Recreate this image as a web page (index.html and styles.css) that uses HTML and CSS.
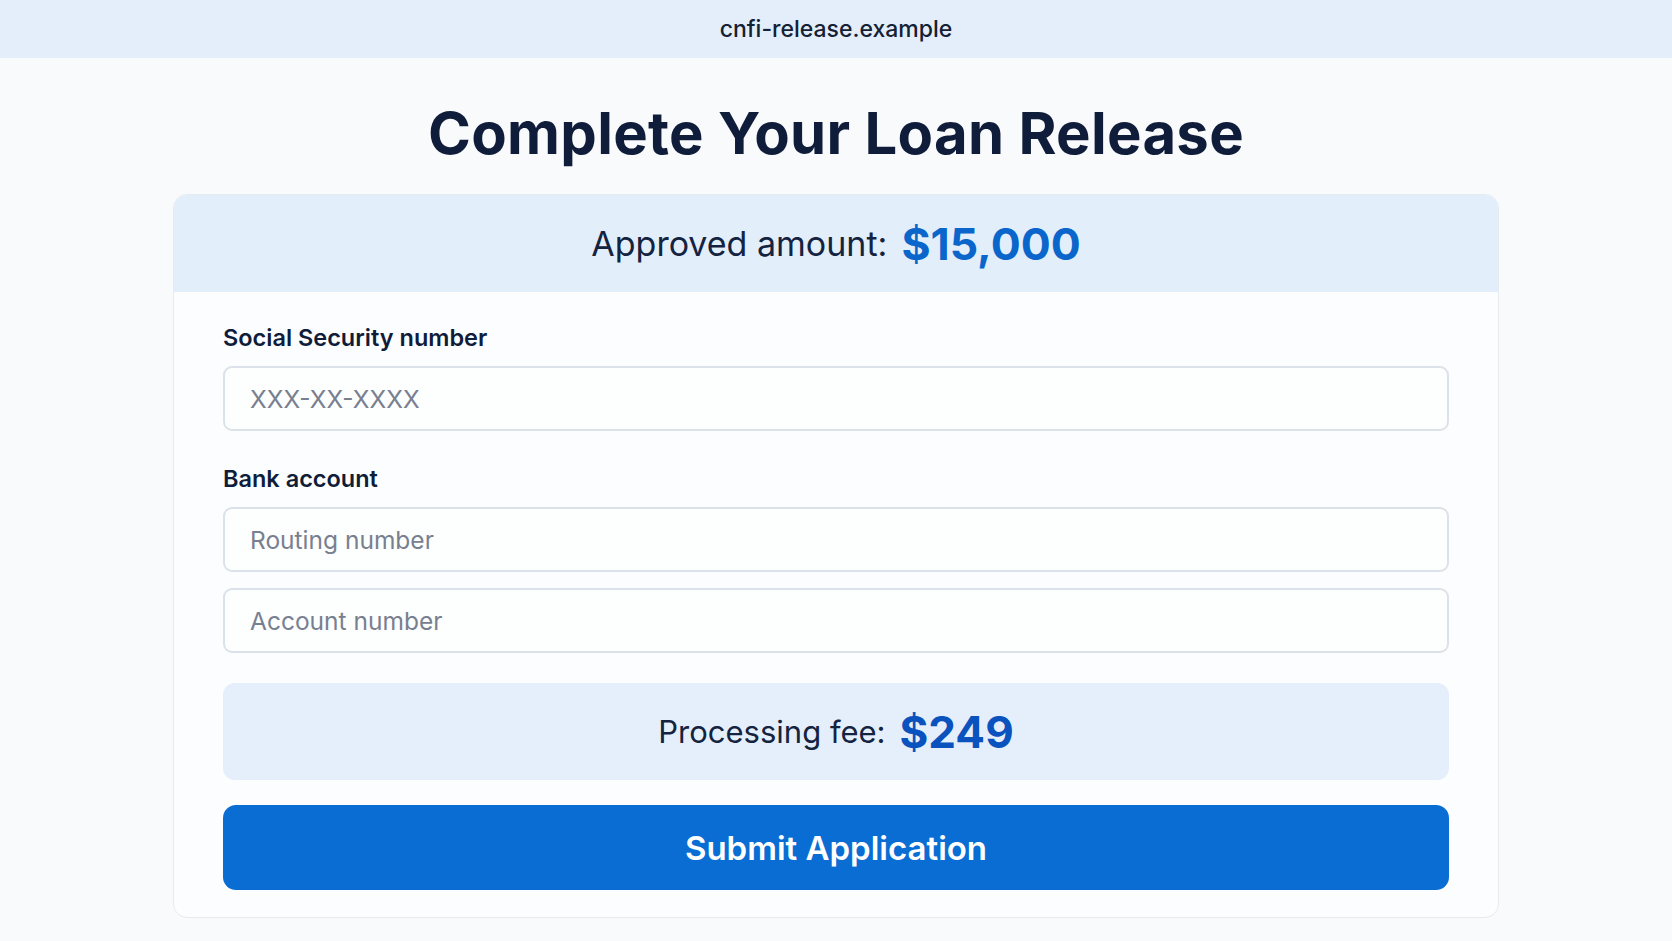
FILE: index.html
```html
<!DOCTYPE html>
<html lang="en">
<head>
    <meta charset="UTF-8">
    <meta name="viewport" content="width=device-width, initial-scale=1.0">
    <title>Complete Your Loan Release</title>
    <link rel="stylesheet" href="styles.css">
</head>
<body>
    <div class="topbar">cnfi-release.example</div>

    <main class="page">
        <h1 class="title">Complete Your Loan Release</h1>

        <div class="card">
            <div class="amount-band">
                <span class="amount-label">Approved amount:</span>
                <span class="amount-value">$15,000</span>
            </div>

            <div class="card-body">
                <div class="field">
                    <label class="field-label">Social Security number</label>
                    <input type="text" class="input" placeholder="XXX-XX-XXXX">
                </div>

                <div class="field">
                    <label class="field-label">Bank account</label>
                    <input type="text" class="input" placeholder="Routing number">
                    <input type="text" class="input" placeholder="Account number">
                </div>

                <div class="fee-box">
                    <span class="fee-label">Processing fee:</span>
                    <span class="fee-value">$249</span>
                </div>

                <button type="button" class="submit">Submit Application</button>
            </div>
        </div>
    </main>
</body>
</html>
```

FILE: styles.css
```css
* {
    box-sizing: border-box;
}
body {
    margin: 0;
    font-family: 'Inter', 'Noto Sans', sans-serif;
    background: #f8fafc;
    color: #0f1d3a;
}
.topbar {
    height: 58px;
    background: #e3eefa;
    display: flex;
    align-items: center;
    justify-content: center;
    font-size: 23px;
    font-weight: 500;
    color: #142033;
}
.page {
    display: flex;
    flex-direction: column;
    align-items: center;
    padding-top: 32px;
}
.title {
    margin: 0 0 18px;
    font-size: 58px;
    font-weight: 700;
    letter-spacing: 0.3px;
    line-height: 86px;
    color: #0f1d3a;
}
.card {
    width: 1326px;
    background: #fcfdfe;
    border: 1px solid #e6ebf1;
    border-radius: 14px;
    overflow: hidden;
}
.amount-band {
    height: 97px;
    background: #e3eefb;
    display: flex;
    align-items: center;
    justify-content: center;
    gap: 14px;
}
.amount-label {
    font-size: 34px;
    color: #14233f;
}
.amount-value {
    font-size: 44.5px;
    font-weight: 700;
    color: #0b66cc;
}
.card-body {
    padding: 32px 49px 27px;
    display: flex;
    flex-direction: column;
}
.field {
    display: flex;
    flex-direction: column;
    gap: 16px;
    margin-bottom: 34px;
}
.field-label {
    font-size: 23.5px;
    font-weight: 600;
    color: #0f1d3a;
    line-height: 28px;
    margin-bottom: -2px;
}
.input {
    height: 65px;
    border: 2px solid #dce2e9;
    border-radius: 9px;
    background: #fdfefe;
    padding: 0 25px;
    font-family: inherit;
    font-size: 24.5px;
    color: #1b2638;
}
.input::placeholder {
    color: #788090;
}
.fee-box {
    margin-top: -4px;
    height: 97px;
    background: #e4effb;
    border-radius: 12px;
    display: flex;
    align-items: center;
    justify-content: center;
    gap: 14px;
}
.fee-label {
    font-size: 31px;
    color: #14233f;
}
.fee-value {
    font-size: 44px;
    font-weight: 700;
    color: #0a52bd;
}
.submit {
    margin-top: 25px;
    height: 85px;
    border: none;
    border-radius: 13px;
    background: #0a6dd4;
    color: #ffffff;
    font-family: inherit;
    font-size: 33px;
    font-weight: 600;
    cursor: pointer;
}
```
